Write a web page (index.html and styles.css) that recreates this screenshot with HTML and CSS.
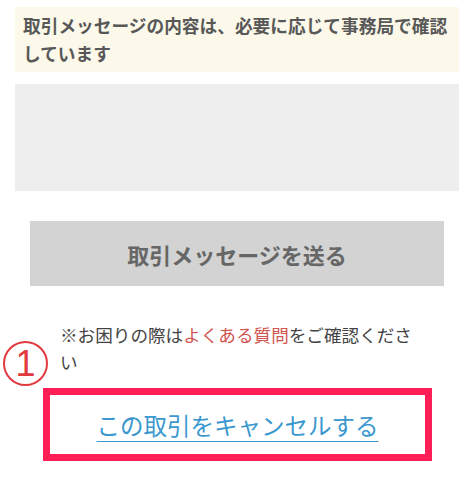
FILE: index.html
```html
<!DOCTYPE html>
<html lang="ja">
<head>
<meta charset="utf-8">
<link rel="stylesheet" href="styles.css">
</head>
<body>
<div class="page">
  <div class="notice">取引メッセージの内容は、必要に応じて事務局で確認しています</div>
  <div class="textarea"></div>
  <div class="send">取引メッセージを送る</div>
  <p class="note">※お困りの際は<a class="faq">よくある質問</a>をご確認ください</p>
  <div class="cancel-wrap">
    <span class="step">1</span>
    <div class="cancel"><a class="cancel-link">この取引をキャンセルする</a></div>
  </div>
</div>
</body>
</html>
```
FILE: styles.css
```css
html, body {
  margin: 0;
  padding: 0;
  background: #ffffff;
}
body {
  font-family: "Noto Sans CJK JP", "Noto Sans", sans-serif;
  color: #444;
}
.page {
  padding: 7px 15px 0;
  position: relative;
}
.notice {
  background: #fcf8ea;
  padding: 4px 8px 5px;
  font-size: 17.7px;
  line-height: 28px;
  font-weight: 700;
  color: #585858;
}
.textarea {
  margin-top: 12px;
  height: 107px;
  background: #eeeeee;
}
.send {
  margin: 30px 15px 0;
  height: 65px;
  background: #d3d3d3;
  display: flex;
  align-items: center;
  justify-content: center;
  font-size: 22px;
  font-weight: 700;
  color: #666;
}
.note {
  margin: 35px 0 0;
  padding: 0 45px;
  font-size: 17.6px;
  line-height: 27px;
  color: #444;
}
.faq {
  color: #d0554f;
}
.cancel-wrap {
  position: relative;
  padding-top: 13px;
}
.step {
  position: absolute;
  left: -12px;
  top: -34px;
  width: 41px;
  height: 41px;
  border: 2px solid #e23a3f;
  border-radius: 50%;
  color: #e23a3f;
  font-family: "Liberation Sans", sans-serif;
  font-size: 36px;
  line-height: 41px;
  text-align: center;
}
.cancel {
  margin-left: 28px;
  width: 375px;
  height: 59px;
  border: 7px solid #fd1f55;
  display: flex;
  align-items: center;
  justify-content: center;
}
.cancel-link {
  color: #3a98cf;
  font-size: 23.5px;
  line-height: 30px;
  text-decoration: underline;
  text-decoration-thickness: 1px;
  text-underline-offset: 6px;
}
```
